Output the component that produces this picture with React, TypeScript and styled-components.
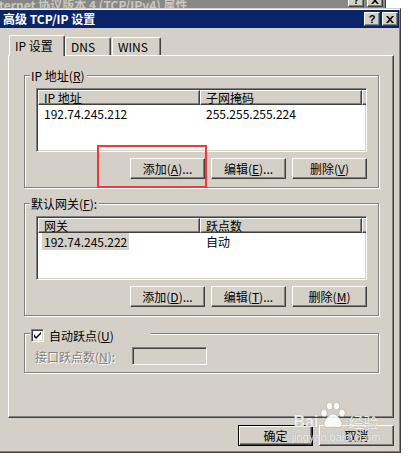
import React from "react";
import styled, { createGlobalStyle } from "styled-components";

const FONT = `"Noto Sans CJK SC", "Liberation Sans", sans-serif`;

const GlobalStyle = createGlobalStyle`
  html, body { margin: 0; padding: 0; background: #ffffff; }
  #root { width: 409px; height: 456px; }
  * { box-sizing: border-box; }
`;

const Screen = styled.div`
  position: relative;
  width: 409px;
  height: 456px;
  overflow: hidden;
  background: #ffffff;
  font-family: ${FONT};
  font-size: 12px;
  color: #000;
`;

/* background window strip */
const BackStrip = styled.div`
  width: 386px;
  height: 8px;
  background: #878787;
  border-right: 1px solid #404040;
  display: flex;
  align-items: flex-end;
  justify-content: space-between;
  overflow: hidden;
  padding-right: 2px;
`;

const BackTitle = styled.span`
  font-weight: bold;
  color: #c9c7c0;
  line-height: 14px;
  white-space: nowrap;
  margin-bottom: -4px;
  margin-left: -1px;
`;

const CaptionButtons = styled.div<{ $gap: number; $mb?: number }>`
  display: flex;
  gap: ${(p) => p.$gap}px;
  margin-bottom: ${(p) => p.$mb ?? 0}px;
`;

const CaptionButton = styled.div`
  width: 16px;
  height: 14px;
  background: #d4d0c8;
  border: 1px solid;
  border-color: #ffffff #404040 #404040 #ffffff;
  box-shadow: inset -1px -1px #808080;
  display: flex;
  align-items: center;
  justify-content: center;
  font-family: "Liberation Sans", sans-serif;
  font-weight: bold;
  font-size: 11px;
  line-height: 1;
  color: #000;
`;

/* dialog */
const Dialog = styled.div`
  margin-left: -3px;
  width: 404px;
  height: 445px;
  background: #d4d0c8;
  border: 1px solid;
  border-color: #d4d0c8 #404040 #404040 #d4d0c8;
  box-shadow: inset 1px 1px #ffffff, inset -1px -1px #808080;
  padding: 1px;
  display: flex;
  flex-direction: column;
`;

const TitleBar = styled.div`
  height: 18px;
  flex-shrink: 0;
  background: #0a246a;
  display: flex;
  align-items: center;
  justify-content: space-between;
  padding: 0 1px 0 4px;
`;

const TitleText = styled.span`
  color: #ffffff;
  font-weight: bold;
  font-size: 12px;
  line-height: 18px;
  white-space: nowrap;
`;

const Body = styled.div`
  flex: 1;
  padding: 7px 5px 0 9px;
  display: flex;
  flex-direction: column;
`;

const TabRow = styled.div`
  height: 20px;
  display: flex;
  align-items: flex-end;
  padding-left: 1px;
`;

const Tab = styled.div<{ $active?: boolean; $w: number; $ml?: number }>`
  position: relative;
  z-index: ${(p) => (p.$active ? 1 : 0)};
  width: ${(p) => p.$w}px;
  height: ${(p) => (p.$active ? 21 : 18)}px;
  margin-bottom: ${(p) => (p.$active ? -1 : 0)}px;
  margin-left: ${(p) => p.$ml ?? 0}px;
  background: #d4d0c8;
  border-top: 1px solid #ffffff;
  border-left: 1px solid #ffffff;
  border-right: 1px solid #404040;
  border-top-left-radius: 2px;
  border-top-right-radius: 2px;
  box-shadow: inset -1px 0 #808080;
  padding-left: 5px;
  display: flex;
  align-items: center;
  white-space: nowrap;
  line-height: 14px;
`;

const Panel = styled.div`
  height: 363px;
  flex-shrink: 0;
  border: 1px solid;
  border-color: #ffffff #404040 #404040 #ffffff;
  box-shadow: inset -1px -1px #808080;
  padding: 12px 14px 0 15px;
  display: flex;
  flex-direction: column;
  gap: 8px;
`;

const Group = styled.fieldset<{ $pt: number; $pb: number }>`
  margin: 0;
  min-width: 0;
  padding: ${(p) => p.$pt}px 11px ${(p) => p.$pb}px 11px;
  border: 1px solid #808080;
  box-shadow: inset 1px 1px #ffffff, 1px 1px #ffffff;
  display: flex;
  flex-direction: column;
  gap: 6px;
`;

const Legend = styled.legend<{ $w?: number; $pt?: number }>`
  margin-left: -6px;
  padding: ${(p) => p.$pt ?? 0}px 2px 0 1px;
  ${(p) => (p.$w ? `width: ${p.$w}px;` : "")}
  line-height: 15px;
  background: #d4d0c8;
  display: flex;
  align-items: center;
  gap: 5px;
  white-space: nowrap;
`;

const List = styled.div`
  height: 64px;
  flex-shrink: 0;
  background: #ffffff;
  border: 1px solid;
  border-color: #808080 #ffffff #ffffff #808080;
  box-shadow: inset 1px 1px #404040, inset -1px -1px #d4d0c8;
  padding: 1px;
  display: flex;
  flex-direction: column;
  overflow: hidden;
`;

const HeaderRow = styled.div`
  display: flex;
  height: 15px;
  flex-shrink: 0;
`;

const HeaderCell = styled.div<{ $w?: number }>`
  ${(p) => (p.$w ? `width: ${p.$w}px; flex: 0 0 auto;` : "flex: 1;")}
  background: #d4d0c8;
  border: 1px solid;
  border-color: #ffffff #404040 #404040 #ffffff;
  box-shadow: inset -1px -1px #808080;
  padding-left: 5px;
  display: flex;
  align-items: center;
  line-height: 13px;
  white-space: nowrap;
`;

const Row = styled.div`
  display: flex;
  height: 17px;
`;

const Cell = styled.div`
  width: 162px;
  flex-shrink: 0;
  padding-left: 4px;
  white-space: nowrap;
`;

const CellText = styled.span<{ $sel?: boolean }>`
  display: inline-block;
  padding: 0 2px;
  line-height: 17px;
  background: ${(p) => (p.$sel ? "#d4d0c8" : "transparent")};
`;

const ButtonRow = styled.div<{ $mt?: number }>`
  display: flex;
  justify-content: flex-end;
  gap: 6px;
  margin-top: ${(p) => p.$mt ?? 0}px;
`;

const Btn = styled.button<{ $default?: boolean }>`
  width: 75px;
  height: 21px;
  margin: 0;
  padding: 0;
  font-family: ${FONT};
  font-size: 12px;
  color: #000;
  background: #d4d0c8;
  white-space: nowrap;
  ${(p) =>
    p.$default
      ? `border: 1px solid #000000;
         box-shadow: inset 1px 1px #ffffff, inset -1px -1px #404040, inset -2px -2px #808080;`
      : `border: 1px solid;
         border-color: #ffffff #404040 #404040 #ffffff;
         box-shadow: inset -1px -1px #808080;`}
`;

const CheckBox = styled.span`
  width: 13px;
  height: 13px;
  flex-shrink: 0;
  background: #ffffff;
  border: 1px solid;
  border-color: #808080 #ffffff #ffffff #808080;
  box-shadow: inset 1px 1px #404040, inset -1px -1px #d4d0c8;
  display: flex;
  align-items: center;
  justify-content: center;
`;

const FieldRow = styled.div`
  display: flex;
  align-items: center;
  height: 18px;
  margin-left: -1px;
`;

const DisabledLabel = styled.span`
  width: 97px;
  flex-shrink: 0;
  color: #808080;
  text-shadow: 1px 1px 0 #ffffff;
  white-space: nowrap;
`;

const DisabledInput = styled.div`
  width: 75px;
  height: 18px;
  background: #d4d0c8;
  border: 1px solid;
  border-color: #808080 #ffffff #ffffff #808080;
  box-shadow: inset 1px 1px #404040, inset -1px -1px #d4d0c8;
`;

/* overlays */
const Annotation = styled.div`
  position: absolute;
  left: 97px;
  top: 145px;
  width: 110px;
  height: 43px;
  border: 2px solid #f03a3a;
  pointer-events: none;
`;

const Watermark = styled.div`
  position: absolute;
  left: 288px;
  top: 401px;
  width: 96px;
  display: flex;
  flex-direction: column;
  align-items: center;
  color: rgba(255, 255, 255, 0.85);
  text-shadow: 0 0 1px rgba(110, 110, 110, 0.6);
  pointer-events: none;
`;

const WaterTop = styled.div`
  display: flex;
  align-items: flex-end;
  gap: 1px;
  height: 30px;
`;

const WaterBai = styled.span`
  font-family: "Liberation Sans", sans-serif;
  font-weight: bold;
  font-size: 16px;
  line-height: 16px;
  margin-bottom: 1px;
`;

const WaterJing = styled.span`
  font-family: ${FONT};
  font-size: 15px;
  line-height: 16px;
  margin-bottom: 1px;
`;

const WaterUrl = styled.span`
  font-family: "Liberation Sans", sans-serif;
  font-size: 11px;
  line-height: 11px;
  margin-top: 1px;
  white-space: nowrap;
`;

const Acc = ({ k }: { k: string }) => (
  <>
    (<u>{k}</u>)
  </>
);

const CloseGlyph = () => (
  <svg width="8" height="7" viewBox="0 0 8 7">
    <path d="M0 0h2l2 2.2L6 0h2L5 3.5 8 7H6L4 4.8 2 7H0l3-3.5z" fill="#000" />
  </svg>
);

const CheckGlyph = () => (
  <svg width="7" height="7" viewBox="0 0 7 7">
    <path d="M0 2v3l2 2 5-5V-0.1L2 4.9z" fill="#000" />
  </svg>
);

const Paw = () => (
  <svg width="28" height="30" viewBox="0 0 28 30">
    <g fill="rgba(255,255,255,0.88)" stroke="rgba(120,120,120,0.55)" strokeWidth="0.6">
      <ellipse cx="5" cy="12" rx="3.2" ry="3.8" />
      <ellipse cx="10.5" cy="5" rx="3.2" ry="3.8" />
      <ellipse cx="17.5" cy="5" rx="3.2" ry="3.8" />
      <ellipse cx="23" cy="12" rx="3.2" ry="3.8" />
      <path d="M14 13c-4 0-9 6-9 10 0 3 3 4 5 3.5 2-.5 6-.5 8 0 2 .5 5-.5 5-3.5 0-4-5-10-9-10z" />
    </g>
  </svg>
);

type ColRow = { a: string; b: string; sel?: boolean };

const ListView = ({ cols, rows }: { cols: [string, string]; rows: ColRow[] }) => (
  <List>
    <HeaderRow>
      <HeaderCell $w={162}>{cols[0]}</HeaderCell>
      <HeaderCell $w={162}>{cols[1]}</HeaderCell>
      <HeaderCell />
    </HeaderRow>
    {rows.map((r) => (
      <Row key={r.a}>
        <Cell>
          <CellText $sel={r.sel}>{r.a}</CellText>
        </Cell>
        <Cell>
          <CellText>{r.b}</CellText>
        </Cell>
      </Row>
    ))}
  </List>
);

export default function App() {
  return (
    <Screen>
      <GlobalStyle />
      <BackStrip>
        <BackTitle>ternet 协议版本 4 (TCP/IPv4) 属性</BackTitle>
        <CaptionButtons $gap={3} $mb={1}>
          <CaptionButton>?</CaptionButton>
          <CaptionButton>
            <CloseGlyph />
          </CaptionButton>
        </CaptionButtons>
      </BackStrip>

      <Dialog>
        <TitleBar>
          <TitleText>高级 TCP/IP 设置</TitleText>
          <CaptionButtons $gap={2}>
            <CaptionButton>?</CaptionButton>
            <CaptionButton>
              <CloseGlyph />
            </CaptionButton>
          </CaptionButtons>
        </TitleBar>

        <Body>
          <TabRow>
            <Tab $active $w={56}>
              IP 设置
            </Tab>
            <Tab $w={46}>DNS</Tab>
            <Tab $w={49} $ml={1}>
              WINS
            </Tab>
          </TabRow>

          <Panel>
            <Group $pt={5} $pb={8}>
              <Legend>
                <span>
                  IP 地址<Acc k="R" />
                </span>
              </Legend>
              <ListView
                cols={["IP 地址", "子网掩码"]}
                rows={[{ a: "192.74.245.212", b: "255.255.255.224" }]}
              />
              <ButtonRow>
                <Btn>
                  添加<Acc k="A" />...
                </Btn>
                <Btn>
                  编辑<Acc k="E" />...
                </Btn>
                <Btn>
                  删除<Acc k="V" />
                </Btn>
              </ButtonRow>
            </Group>

            <Group $pt={5} $pb={8}>
              <Legend>
                <span>
                  默认网关<Acc k="F" />:
                </span>
              </Legend>
              <ListView
                cols={["网关", "跃点数"]}
                rows={[{ a: "192.74.245.222", b: "自动", sel: true }]}
              />
              <ButtonRow>
                <Btn>
                  添加<Acc k="D" />...
                </Btn>
                <Btn>
                  编辑<Acc k="T" />...
                </Btn>
                <Btn>
                  删除<Acc k="M" />
                </Btn>
              </ButtonRow>
            </Group>

            <Group $pt={4} $pb={7}>
              <Legend $w={121} $pt={4}>
                <CheckBox>
                  <CheckGlyph />
                </CheckBox>
                <span>
                  自动跃点<Acc k="U" />
                </span>
              </Legend>
              <FieldRow>
                <DisabledLabel>
                  接口跃点数<Acc k="N" />:
                </DisabledLabel>
                <DisabledInput />
              </FieldRow>
            </Group>
          </Panel>

          <ButtonRow $mt={7}>
            <Btn $default>确定</Btn>
            <Btn>取消</Btn>
          </ButtonRow>
        </Body>
      </Dialog>

      <Annotation />
      <Watermark>
        <WaterTop>
          <WaterBai>Bai</WaterBai>
          <Paw />
          <WaterJing>经验</WaterJing>
        </WaterTop>
        <WaterUrl>jingyan.baidu.com</WaterUrl>
      </Watermark>
    </Screen>
  );
}
